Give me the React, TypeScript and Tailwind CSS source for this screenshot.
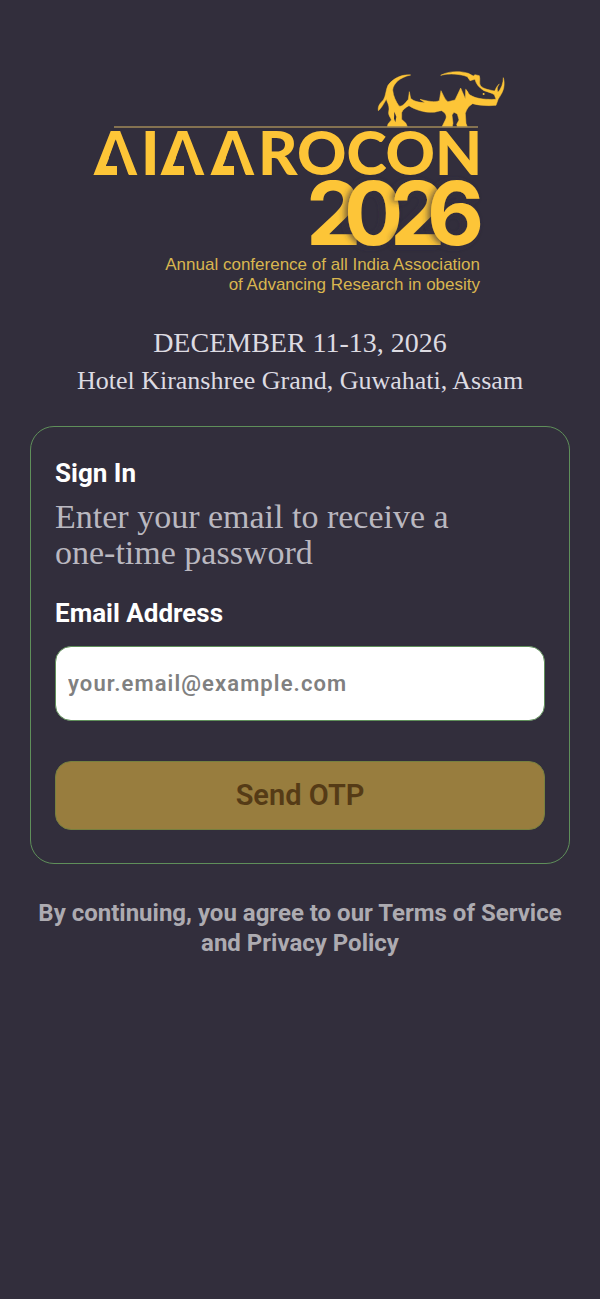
import { useState } from "react";

const GOLD = "#fdc537";
const BACKDROP = "#322e3c";

// left foot of each letter A in the wordmark
const PEAKS = [94, 161, 211];

const YEAR = [
  { digit: "2", x: 306 },
  { digit: "0", x: 344 },
  { digit: "2", x: 390 },
  { digit: "6", x: 427 },
];

function Rhino() {
  return (
    <g transform="translate(360 60) scale(0.3333)" fill={GOLD} stroke={GOLD} strokeWidth="1.5">
      <path d="M152 45C125 42 98 56 84 76C77 90 78 108 70 120C60 130 53 138 55 152C62 148 72 130 79 118C82 128 90 140 86 155C84 165 92 172 94 180L84 192L82 200H142L138 190L125 178V158C128 148 138 142 147 137C165 149 190 157 215 157C228 157 238 152 245 152C258 160 262 168 256 180L246 200H277L279 190L276 165L282 157L292 162L297 180L290 193L292 200H322L318 190L316 160C320 148 325 138 338 131C360 137 385 138 408 136L413 122C416 112 425 106 431 85C434 70 432 60 430 53C430 70 424 85 414 97C410 85 412 80 418 72C410 78 407 88 404 93C390 90 372 88 362 78C356 68 362 60 358 47L345 44L340 48L325 40C300 32 265 33 242 46C270 39 300 42 322 50L330 62L345 58C348 72 358 84 372 92C385 96 395 99 403 104L408 118C385 119 350 118 332 106C325 104 324 92 317 88L316 116L302 84L285 120L264 125C255 120 250 105 243 92L238 122C225 128 205 124 180 118L195 128C180 128 160 124 152 115L148 95L145 118L135 130C128 137 122 140 117 138C108 125 100 110 98 90C100 70 120 52 152 45Z" />
      <path d="M103 155L109 170L106 187L102 176Z" fill={BACKDROP} stroke="none" />
      <circle cx="371" cy="102" r="3" stroke="none" />
    </g>
  );
}

function Logo() {
  return (
    <svg
      viewBox="90 65 420 235"
      className="w-[70%]"
      role="img"
      aria-label="AIAAROCON 2026"
    >
      <defs>
        <filter id="digit-shadow" x="-30%" y="-10%" width="160%" height="120%">
          <feDropShadow dx="-3" dy="1" stdDeviation="3" floodColor={BACKDROP} floodOpacity="0.7" />
        </filter>
      </defs>
      <Rhino />
      <path d="M114 127H478" stroke="#a08a58" strokeWidth="1.5" />
      <text y="175" fontSize="61" fontWeight="900" fill={GOLD} className="font-['Lato',sans-serif]">
        <tspan x="94">A</tspan>
        <tspan x="141">I</tspan>
        <tspan x="161">A</tspan>
        <tspan x="211">A</tspan>
        <tspan x="258">ROCON</tspan>
      </text>
      {PEAKS.map((x) => (
        <g key={x} transform={`translate(${x} 175)`}>
          <path d="M22 -35L12 -9H23V1H35Z" fill={BACKDROP} />
          <path d="M5 0L10 -9H23V0Z" fill={GOLD} />
        </g>
      ))}
      {YEAR.map(({ digit, x }) => (
        <text
          key={x}
          x={x}
          y="245"
          fontSize="88"
          fontWeight="700"
          fill={GOLD}
          filter={x > 306 ? "url(#digit-shadow)" : undefined}
          className="font-['Inter',sans-serif]"
        >
          {digit}
        </text>
      ))}
      <g fontSize="17" fill="#d9b64f" textAnchor="end" className="font-['Liberation_Sans',sans-serif]">
        <text x="480" y="270">Annual conference of all India Association</text>
        <text x="480" y="290">of Advancing Research in obesity</text>
      </g>
    </svg>
  );
}

export default function App() {
  const [email, setEmail] = useState("");

  return (
    <main className="flex min-h-screen flex-col items-center bg-[#322e3c] px-[30px] pt-[65px] font-['Roboto',sans-serif]">
      <div className="flex w-screen justify-center">
        <Logo />
      </div>

      <div className="mt-6 text-center font-['Liberation_Serif',serif] text-[#dddbe2]">
        <p className="text-[28px] leading-[38px]">DECEMBER 11-13, 2026</p>
        <p className="text-[26px] leading-[38px]">Hotel Kiranshree Grand, Guwahati, Assam</p>
      </div>

      <form
        onSubmit={(e) => e.preventDefault()}
        className="mt-[26px] flex w-full flex-col rounded-3xl border border-[#5f8f5a] px-6 pt-7 pb-[33px]"
      >
        <h1 className="text-[26px] leading-9 font-bold text-white">Sign In</h1>
        <p className="mt-2 max-w-[420px] font-['Liberation_Serif',serif] text-[34px] leading-9 text-[#bab8c0]">
          Enter your email to receive a one-time password
        </p>

        <label htmlFor="email" className="mt-6 text-[26px] leading-9 font-bold text-white">
          Email Address
        </label>
        <input
          id="email"
          type="email"
          value={email}
          onChange={(e) => setEmail(e.target.value)}
          placeholder="your.email@example.com"
          className="mt-[15px] h-[75px] w-full rounded-2xl border border-[#5f8f5a] bg-white px-3 text-[22px] font-semibold tracking-wider text-gray-800 outline-none placeholder:text-[#808080]"
        />

        <button
          type="submit"
          className="mt-10 h-[69px] w-full rounded-2xl border border-[#77803f] bg-[#987d3e] text-[29px] font-semibold text-[#553b16]"
        >
          Send OTP
        </button>
      </form>

      <p className="mt-[34px] text-center text-2xl leading-[30px] font-bold text-[#adabb1]">
        By continuing, you agree to our Terms of Service and Privacy Policy
      </p>
    </main>
  );
}
